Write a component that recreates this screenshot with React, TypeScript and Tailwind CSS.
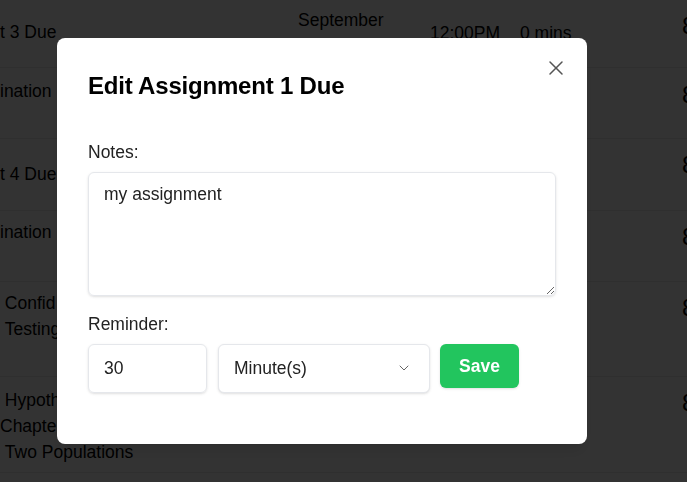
import { X, ChevronDown } from 'lucide-react';

interface Row {
  h: string;
  lines: { text: string; top: string }[];
  eightTop: string;
  extra?: boolean;
}

const rows: Row[] = [
  { h: 'h-[68px]', lines: [{ text: 't 3 Due', top: 'pt-[20px]' }], eightTop: 'pt-[12px]', extra: true },
  { h: 'h-[71px]', lines: [{ text: 'ination', top: 'pt-[11px]' }], eightTop: 'pt-[13px]' },
  { h: 'h-[72px]', lines: [{ text: 't 4 Due', top: 'pt-[23px]' }], eightTop: 'pt-[12px]' },
  { h: 'h-[71px]', lines: [{ text: 'ination', top: 'pt-[9px]' }], eightTop: 'pt-[12px]' },
  {
    h: 'h-[95px]',
    lines: [
      { text: '\u00a0Confid', top: 'pt-[9px]' },
      { text: '\u00a0Testing', top: 'pt-[1px]' },
    ],
    eightTop: 'pt-[12px]',
  },
  {
    h: 'h-[96px]',
    lines: [
      { text: '\u00a0Hypoth', top: 'pt-[11px]' },
      { text: 'Chapte', top: 'pt-[1px]' },
      { text: '\u00a0Two Populations', top: 'pt-[1px]' },
    ],
    eightTop: 'pt-[12px]',
  },
  { h: 'h-[40px]', lines: [], eightTop: 'pt-[12px]' },
];

export default function App() {
  return (
    <div className="relative h-[482px] w-[687px] overflow-hidden bg-white font-['Liberation_Sans',Arial,sans-serif] text-black">
      {/* table behind the dialog */}
      <div className="flex flex-col">
        {rows.map((row, i) => (
          <div key={i} className={`relative flex border-b border-[#e8e8e8] ${row.h}`}>
            <div className="w-[298px] flex flex-col text-[17.5px] leading-[25px]">
              {row.lines.map((l, j) => (
                <div key={j} className={l.top}>{l.text}</div>
              ))}
            </div>
            {row.extra && (
              <>
                <div className="w-[132px] pt-[8px] text-[17.5px] leading-[24px]">September</div>
                <div className="w-[90px] pt-[21px] text-[17.5px] leading-[24px]">12:00PM</div>
                <div className="w-[163px] pt-[21px] text-[17.5px] leading-[24px]">0 mins</div>
              </>
            )}
            <div className={`absolute left-[682px] top-0 text-[24px] leading-[28px] ${row.eightTop}`}>8</div>
          </div>
        ))}
      </div>

      {/* overlay */}
      <div className="fixed inset-0 flex items-center bg-black/80">
        <div className="relative ml-[57px] w-[530px] rounded-lg bg-white px-[31px] pt-8 pb-[51px] shadow-lg">
          <button className="absolute right-[19px] top-[18px] text-[#555]">
            <X size={24} strokeWidth={1.5} />
          </button>
          <h2 className="text-[24px] font-bold leading-8 tracking-[-0.2px]">Edit Assignment 1 Due</h2>

          <label className="mt-[38px] mb-2 block text-[17.5px] leading-6 text-[#222]">Notes:</label>
          <textarea
            defaultValue="my assignment"
            className="block h-[124px] w-full rounded-md border border-[#e5e7eb] px-[15px] py-[9px] text-[17.5px] leading-6 text-[#222] shadow-sm outline-none"
          />

          <label className="mt-4 mb-2 block text-[17.5px] leading-6 text-[#222]">Reminder:</label>
          <div className="flex items-start">
            <input
              defaultValue="30"
              className="h-[49px] w-[119px] rounded-md border border-[#e5e7eb] px-[15px] text-[17.5px] text-[#222] shadow-sm outline-none"
            />
            <div className="relative ml-[11px] h-[49px] w-[212px]">
              <select
                defaultValue="m"
                className="h-full w-full appearance-none rounded-md border border-[#e5e7eb] bg-white px-[15px] text-[17.5px] text-[#222] shadow-sm outline-none"
              >
                <option value="m">Minute(s)</option>
                <option value="h">Hour(s)</option>
                <option value="d">Day(s)</option>
              </select>
              <ChevronDown
                size={16}
                strokeWidth={1.5}
                className="pointer-events-none absolute right-[18px] top-[16px] text-[#666]"
              />
            </div>
            <button className="ml-[10px] h-[44px] w-[79px] rounded-md bg-[#22c55e] text-[17.5px] font-semibold text-white shadow-sm">
              Save
            </button>
          </div>
        </div>
      </div>
    </div>
  );
}
